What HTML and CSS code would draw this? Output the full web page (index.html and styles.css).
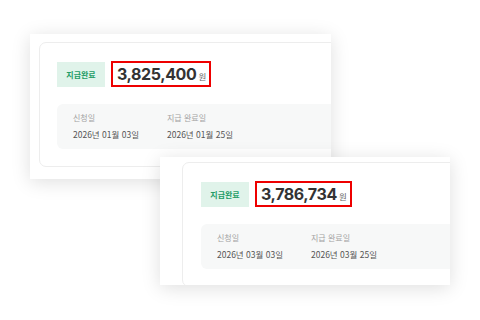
FILE: index.html
```html
<!DOCTYPE html>
<html lang="ko">
<head>
<meta charset="utf-8">
<link rel="stylesheet" href="styles.css">
</head>
<body>
<div class="stage">
  <div class="shot shot-one">
    <div class="card">
      <div class="top-row">
        <span class="badge">지급완료</span>
        <span class="amount-box"><span class="amount">3,825,400</span><span class="unit">원</span></span>
      </div>
      <div class="info">
        <span class="label">신청일</span>
        <span class="label">지급 완료일</span>
        <span class="date">2026년 01월 03일</span>
        <span class="date">2026년 01월 25일</span>
      </div>
    </div>
  </div>
  <div class="shot shot-two">
    <div class="card">
      <div class="top-row">
        <span class="badge">지급완료</span>
        <span class="amount-box"><span class="amount">3,786,734</span><span class="unit">원</span></span>
      </div>
      <div class="info">
        <span class="label">신청일</span>
        <span class="label">지급 완료일</span>
        <span class="date">2026년 03월 03일</span>
        <span class="date">2026년 03월 25일</span>
      </div>
    </div>
  </div>
</div>
</body>
</html>
```
FILE: styles.css
```css
html, body {
  margin: 0;
  padding: 0;
  background: #ffffff;
}
body {
  font-family: Inter, "Noto Sans CJK KR", sans-serif;
  color: #333;
}
.stage {
  position: relative;
  width: 480px;
  height: 320px;
  overflow: hidden;
}
.shot {
  position: absolute;
  background: #ffffff;
  overflow: hidden;
  box-shadow: 0 3px 18px rgba(0, 0, 0, 0.13);
}
.shot-one {
  left: 30px;
  top: 34px;
  width: 301px;
  height: 145px;
}
.shot-two {
  left: 160px;
  top: 157px;
  width: 290px;
  height: 128px;
}
.card {
  width: 420px;
  border: 1px solid #ededed;
  border-radius: 7px;
  padding: 18px 17px 17px 17px;
  box-sizing: border-box;
}
.shot-one .card {
  margin: 8px 0 0 9px;
}
.shot-two .card {
  margin: 5px 0 0 22px;
  padding-left: 18px;
}
.top-row {
  display: flex;
  align-items: center;
  gap: 6px;
  height: 26px;
}
.badge {
  display: flex;
  align-items: center;
  justify-content: center;
  width: 48px;
  height: 25px;
  background: #e0f3ea;
  color: #239c66;
  font-family: "Noto Sans CJK KR", sans-serif;
  font-size: 8px;
  font-weight: 600;
}
.amount-box {
  display: flex;
  align-items: baseline;
  border: 2px solid #ee0000;
  padding: 0 3px 0 4px;
  height: 22px;
  line-height: 22px;
}
.amount {
  font-family: Inter, sans-serif;
  font-size: 16px;
  font-weight: 700;
  color: #333;
  letter-spacing: -0.4px;
}
.unit {
  font-family: "Noto Sans CJK KR", sans-serif;
  font-size: 8.5px;
  color: #666;
  margin-left: 2px;
}
.info {
  margin-top: 17px;
  background: #f7f8f8;
  border-radius: 6px;
  padding: 8px 16px 9px 16px;
  display: grid;
  grid-template-columns: 94px auto;
  row-gap: 4px;
  font-family: "Noto Sans CJK KR", sans-serif;
}
.label {
  font-size: 8px;
  line-height: 12px;
  color: #a3a3a3;
}
.date {
  font-size: 8.5px;
  line-height: 12px;
  color: #555;
}
```
